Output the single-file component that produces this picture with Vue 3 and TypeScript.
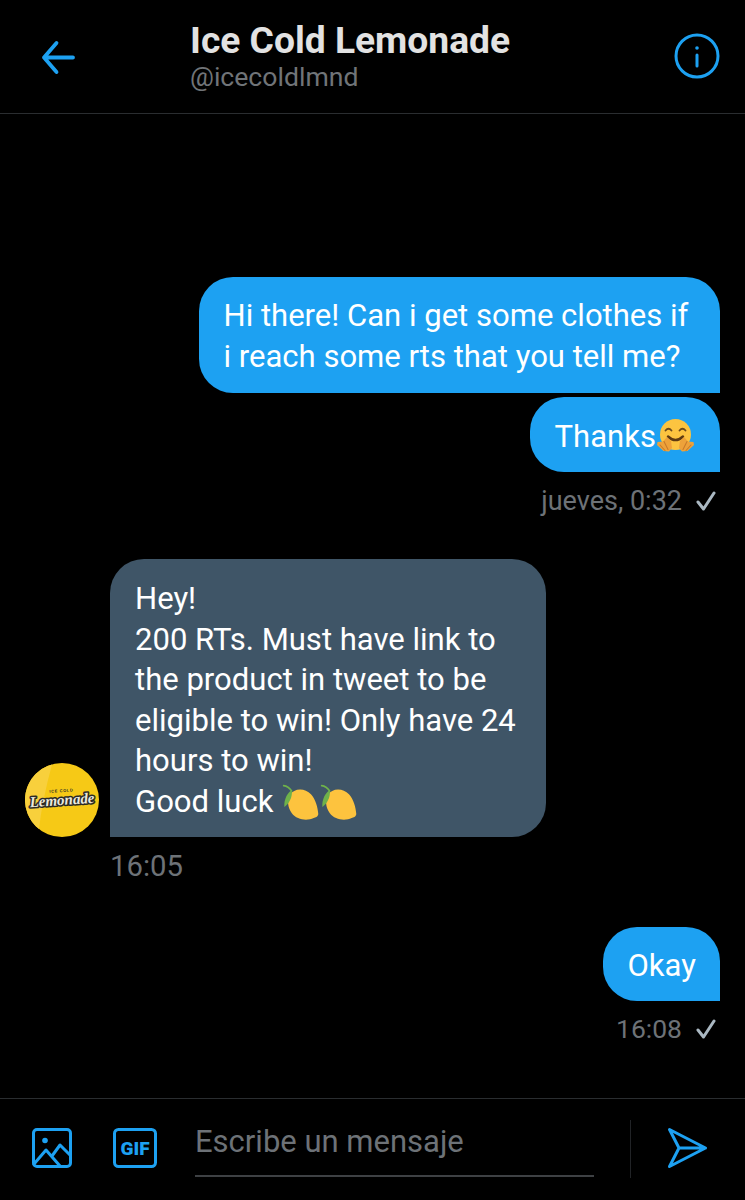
<script setup lang="ts">
const lemons: number[] = [0, 1]
</script>

<template>
  <div class="screen">
    <header class="top">
      <svg class="back" viewBox="0 0 36 36" width="36" height="36" fill="none" stroke="#1da1f2" stroke-width="3.8" stroke-linecap="round" stroke-linejoin="round">
        <path d="M4 17.5H33M16.5 3L4 17.5L16.5 32" />
      </svg>
      <div class="names">
        <div class="title">Ice Cold Lemonade</div>
        <div class="handle">@icecoldlmnd</div>
      </div>
      <svg class="info" viewBox="0 0 46 46" width="46" height="46" fill="none" stroke="#1da1f2" stroke-width="3" stroke-linecap="round">
        <circle cx="23" cy="23" r="21" />
        <path d="M23 22V33" />
        <circle cx="23" cy="15" r="1.8" fill="#1da1f2" stroke="none" />
      </svg>
    </header>

    <main class="chat">
      <div class="bubble me first">Hi there! Can i get some clothes if<br />i reach some rts that you tell me?</div>
      <div class="bubble me second">
        <span>Thanks</span>
        <svg class="hug" viewBox="6 2 38 34" width="38" height="34">
          <circle cx="25.5" cy="18.5" r="15.5" fill="#fcc440" />
          <path d="M15.5 14.5q3-3.5 6 0M29.5 14.5q3-3.5 6 0" fill="none" stroke="#6b4a1e" stroke-width="1.8" stroke-linecap="round" />
          <path d="M18 20.5q7.5 7 15 0" fill="none" stroke="#5d3a12" stroke-width="2.4" stroke-linecap="round" />
          <path d="M17 21l4 4 1 7-3 3.5-5.5-.5-6.5-6 .5-3 5.5-.5z" fill="#eda23a" />
          <path d="M34 21l-4 4-1 7 3 3.5 5.5-.5 6.5-6-.5-3-5.5-.5z" fill="#eda23a" />
          <path d="M10 29l5 5.5M14 25.5l4 8M41 29l-5 5.5M37 25.5l-4 8" stroke="#c97a2a" stroke-width="1.1" stroke-linecap="round" />
        </svg>
      </div>
      <div class="meta right">
        <span>jueves, 0:32</span>
        <svg viewBox="0 0 22 20" width="22" height="20" fill="none" stroke="#aab8c2" stroke-width="3" stroke-linecap="round" stroke-linejoin="round">
          <path d="M3 11l5.5 7L19 2" />
        </svg>
      </div>

      <div class="incoming">
        <div class="avatar">
          <svg viewBox="0 0 74 74" width="74" height="74">
            <circle cx="37" cy="37" r="37" fill="#f6c916" />
            <path d="M27 1.4Q17 38 14 66A37 37 0 0 1 27 1.4z" fill="#f8d03c" />
            <g transform="rotate(-4 37 37)">
              <text x="37" y="29" text-anchor="middle" class="logo-small">ICE COLD</text>
              <text x="37" y="42" text-anchor="middle" class="logo">Lemonade</text>
            </g>
          </svg>
        </div>
        <div class="bubble them">Hey!<br />200 RTs. Must have link to<br />the product in tweet to be<br />eligible to win! Only have 24<br />hours to win!<br />Good luck
          <span class="lemons">
            <svg v-for="n in lemons" :key="n" viewBox="10 5 115 115" width="38.3" height="38.3">
              <path d="M36 44C50 22 82 22 100 42C114 58 120 80 122 102C120 110 114 112 108 113C90 122 58 120 42 98C30 82 28 58 36 44z" fill="#fdc33e" />
              <path d="M42 30C30 36 18 58 20 80C32 72 46 52 42 30z" fill="#6fb24a" />
              <path d="M18 16Q32 18 42 32" fill="none" stroke="#6fb24a" stroke-width="5" stroke-linecap="round" />
            </svg>
          </span>
        </div>
      </div>
      <div class="meta stamp">16:05</div>

      <div class="bubble me okay">Okay</div>
      <div class="meta right small">
        <span>16:08</span>
        <svg viewBox="0 0 22 20" width="22" height="20" fill="none" stroke="#aab8c2" stroke-width="3" stroke-linecap="round" stroke-linejoin="round">
          <path d="M3 11l5.5 7L19 2" />
        </svg>
      </div>
    </main>

    <footer class="composer">
      <svg class="tool pic" viewBox="0 0 42 42" width="42" height="42" fill="none" stroke="#1da1f2" stroke-width="3" stroke-linejoin="round" stroke-linecap="round">
        <rect x="2.5" y="2.5" width="37" height="37" rx="3.5" />
        <circle cx="14" cy="13.5" r="2.8" fill="#1da1f2" stroke="none" />
        <path d="M3 37L15 23L29 39M21 29L29 18L39 28" />
      </svg>
      <svg class="tool gif" viewBox="0 0 46 42" width="46" height="42">
        <rect x="2.5" y="2.5" width="41" height="37" rx="4" fill="none" stroke="#1da1f2" stroke-width="3" />
        <text x="23" y="27.5" text-anchor="middle" class="gif-text">GIF</text>
      </svg>
      <div class="field">Escribe un mensaje</div>
      <div class="divider"></div>
      <svg class="send" viewBox="0 0 42 42" width="42" height="42" fill="none" stroke="#1da1f2" stroke-width="3" stroke-linejoin="round" stroke-linecap="round">
        <path d="M2.5 2.5L38.5 21L2.5 39.5L12 21ZM12 21H38.5" />
      </svg>
    </footer>
  </div>
</template>

<style>
html, body { margin: 0; background: #000; }
</style>

<style scoped>
.screen {
  width: 745px;
  height: 1200px;
  background: #000;
  display: flex;
  flex-direction: column;
  font-family: Roboto, "Liberation Sans", sans-serif;
  overflow: hidden;
}
.top {
  height: 113px;
  border-bottom: 1px solid #2a2d30;
  display: flex;
  align-items: flex-start;
}
.back { margin: 40px 0 0 40px; flex: none; }
.names { margin: 19px 0 0 114px; flex: 1; }
.title {
  font-size: 37.2px;
  line-height: 42px;
  font-weight: 700;
  color: #e2e2e2;
}
.handle {
  font-size: 26.6px;
  line-height: 32px;
  color: #707478;
}
.info { margin: 33px 25px 0 0; flex: none; }
.chat {
  flex: 1;
  display: flex;
  flex-direction: column;
  padding-top: 163px;
}
.bubble {
  box-sizing: border-box;
  font-size: 31.05px;
  line-height: 40.5px;
  color: #fff;
  padding: 19px 25px;
  white-space: nowrap;
}
.me {
  align-self: flex-end;
  margin-right: 25px;
  background: #1da1f2;
  border-radius: 34px 34px 0 34px;
  padding-left: 24.5px;
}
.first { width: 521px; height: 116px; }
.second {
  margin-top: 4px;
  width: 190px;
  height: 75px;
  display: flex;
  align-items: center;
  padding-top: 5px;
  padding-bottom: 0;
}
.hug { margin-top: -5px; }
.meta {
  font-size: 27px;
  line-height: 32px;
  color: #6d7277;
}
.right {
  align-self: flex-end;
  margin: 13px 28px 0 0;
  display: flex;
  align-items: center;
  gap: 13px;
}
.small { font-size: 26.5px; margin-top: 12px; }
.incoming {
  margin-top: 42px;
  margin-left: 25px;
  display: flex;
  align-items: flex-end;
  gap: 11px;
}
.avatar { width: 74px; height: 74px; }
.logo-small {
  font-family: "Liberation Sans", sans-serif;
  font-weight: 700;
  font-size: 4px;
  letter-spacing: 0.6px;
  fill: #2b2a26;
}
.logo {
  font-family: "Liberation Serif", serif;
  font-style: italic;
  font-weight: 700;
  font-size: 15px;
  fill: #ece9dc;
  stroke: #2b2a26;
  stroke-width: 3px;
  paint-order: stroke;
  stroke-linejoin: round;
}
.them {
  width: 436px;
  height: 278px;
  background: #3f5567;
  border-radius: 34px 34px 34px 0;
  padding-top: 20px;
}
.lemons {
  display: inline-flex;
  vertical-align: -9px;
  line-height: 0;
}
.stamp { margin: 13px 0 0 110px; font-size: 29.3px; }
.okay {
  margin-top: 45px;
  width: 117px;
  height: 74px;
  padding-top: 19px;
}
.composer {
  height: 101px;
  border-top: 1px solid #2a2d30;
  display: flex;
  align-items: flex-start;
}
.tool { margin-top: 28px; flex: none; }
.pic { margin-left: 31px; }
.gif { margin-left: 39px; }
.gif-text {
  font-family: Roboto, sans-serif;
  font-weight: 900;
  font-size: 19px;
  fill: #1da1f2;
}
.field {
  margin: 22px 0 0 37px;
  width: 399px;
  height: 56px;
  box-sizing: border-box;
  border-bottom: 2px solid #3e4144;
  font-size: 31px;
  line-height: 42px;
  color: #6d7277;
  flex: none;
}
.divider {
  width: 1px;
  height: 58px;
  background: #212326;
  margin: 21px 0 0 36px;
  flex: none;
}
.send { margin: 28px 0 0 36px; flex: none; }
</style>
